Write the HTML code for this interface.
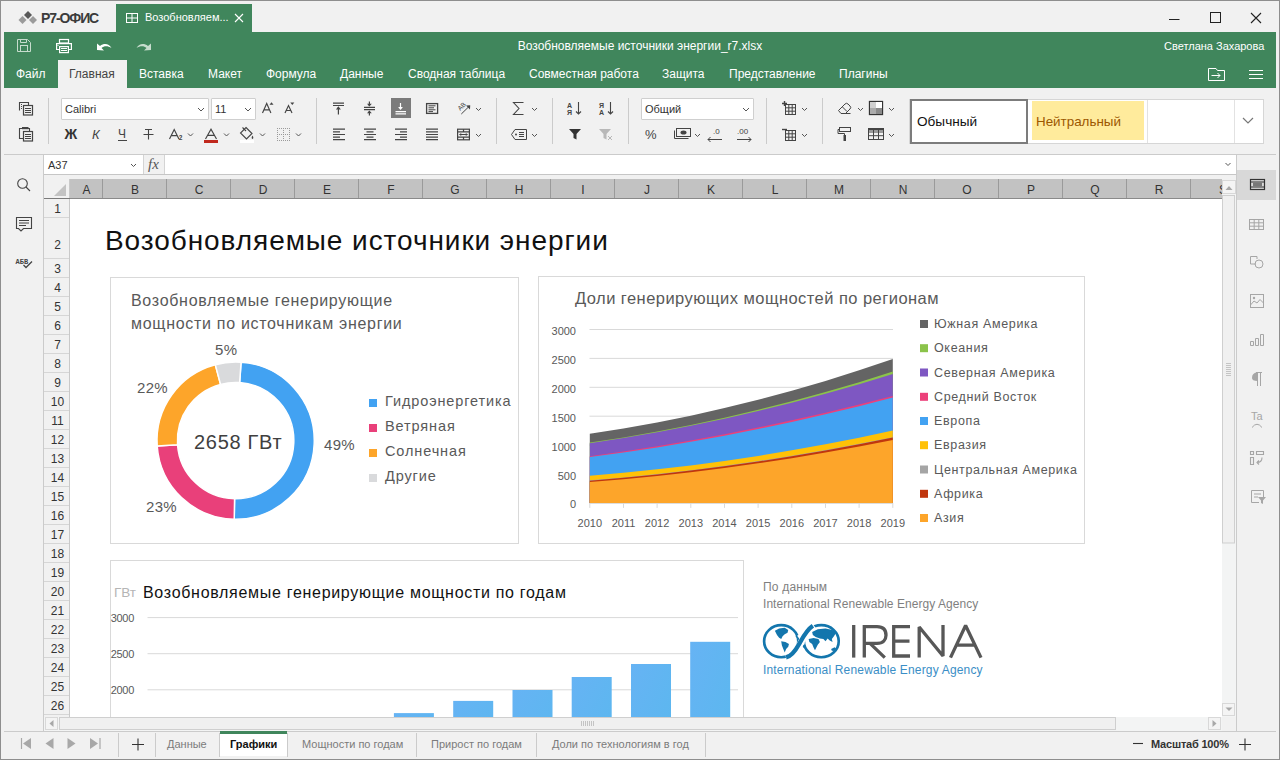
<!DOCTYPE html>
<html><head><meta charset="utf-8">
<style>
*{margin:0;padding:0;box-sizing:border-box}
html,body{width:1280px;height:760px;overflow:hidden;background:#f1f1f1;font-family:"Liberation Sans",sans-serif;}
.a{position:absolute;white-space:nowrap}
.menu span{position:absolute;top:67px;font-size:12px;color:#fff;white-space:nowrap}
.rh{position:absolute;left:44px;width:25px;text-align:center;font-size:12px;color:#333;background:#f1f1f1;border-right:1px solid #c9c9c9}
.rhl{position:absolute;left:44px;width:25px;height:1px;background:#d6d6d6}
.ch{position:absolute;top:181px;height:17px;text-align:center;font-size:12px;line-height:19px;color:#333}
.chl{position:absolute;top:179px;width:1px;height:19px;background:#9a9a9a}
.st{position:absolute;top:738px;font-size:11px;color:#7b7b7b;white-space:nowrap}
.sep{position:absolute;width:1px;background:#cbcbcb}
svg{position:absolute;left:0;top:0}
</style></head>
<body>
<!-- window border -->
<div class="a" style="left:0;top:0;width:1280px;height:760px;border:1px solid #8e8e8e"></div>

<!-- logo -->
<svg width="1280" height="34" viewBox="0 0 1280 34" style="top:0">
 <path d="M28 11 L32 15 L28 19 L24 15Z" fill="#595959"/>
 <path d="M22.5 16 L26.5 20 L22.5 24 L18.5 20Z" fill="#9b9b9b"/>
 <path d="M33 16 L37 20 L33 24 L29 20Z" fill="#9b9b9b"/>
 <!-- window controls -->
 <path d="M1169 19.5 H1179.5" stroke="#222" stroke-width="1"/>
 <rect x="1210.5" y="12.5" width="10" height="10" fill="none" stroke="#222" stroke-width="1"/>
 <path d="M1251 13 L1261 23 M1261 13 L1251 23" stroke="#222" stroke-width="1.1"/>
</svg>
<div class="a" style="left:41px;top:9.5px;font-size:14px;font-weight:bold;color:#3b3b3b;letter-spacing:-1.1px">Р7-ОФИС</div>

<!-- doc tab -->
<div class="a" style="left:116px;top:4px;width:136px;height:28px;background:#40865c"></div>
<div class="a" style="left:145px;top:11px;font-size:11px;color:#fff">Возобновляем...</div>

<!-- green header -->
<div class="a" style="left:4px;top:32px;width:1272px;height:56px;background:#40865c"></div>
<div class="a" style="left:58px;top:60px;width:69px;height:28px;background:#f1f1f1"></div>
<div class="a" style="left:0;top:39px;width:1280px;text-align:center;font-size:12px;color:#fff">Возобновляемые источники энергии_r7.xlsx</div>
<div class="a" style="left:1164px;top:40px;font-size:11px;color:#fff">Светлана Захарова</div>
<div class="menu">
<span style="left:16px">Файл</span>
<span style="left:69px;color:#444">Главная</span>
<span style="left:139px">Вставка</span>
<span style="left:208px">Макет</span>
<span style="left:266px">Формула</span>
<span style="left:340px">Данные</span>
<span style="left:408px">Сводная таблица</span>
<span style="left:529px">Совместная работа</span>
<span style="left:662px">Защита</span>
<span style="left:729px">Представление</span>
<span style="left:839px">Плагины</span>
</div>

<svg width="1280" height="90" viewBox="0 0 1280 90">
 <!-- tab icon -->
 <rect x="126.5" y="13.5" width="11" height="9" fill="none" stroke="#fff" stroke-width="1"/>
 <path d="M132 13.5 V22.5 M126.5 18 H137.5" stroke="#fff" stroke-width="1"/>
 <path d="M235 14 L243 22 M243 14 L235 22" stroke="#fff" stroke-width="1.1"/>
 <!-- save (disabled) -->
 <g stroke="#c6dccd" fill="none" stroke-width="1">
  <path d="M17.5 39.5 H27.5 L30.5 42.5 V51.5 H17.5 Z"/>
  <rect x="20.5" y="45.5" width="7" height="6"/>
  <path d="M20.5 39.5 V42.5 H26.5 V39.5"/>
 </g>
 <!-- print -->
 <g stroke="#fff" fill="none" stroke-width="1.2">
  <rect x="59.5" y="39.5" width="9" height="3.5"/>
  <path d="M59 49.5 H56.6 V43.6 H71.4 V49.5 H69"/>
  <rect x="59.6" y="46.6" width="8.8" height="6"/>
 </g>
 <path d="M61 48.5 H67 M61 50.5 H67" stroke="#fff" stroke-width="1"/>
 <rect x="57.5" y="45" width="1" height="1" fill="#fff"/>
 <!-- undo -->
 <path d="M97 50 L97 43.5 L100 46 C104 43 109 43.5 111.5 48 C108 45.5 104 45.5 101.5 48 L104 50.5 Z" fill="#fff"/>
 <!-- redo disabled -->
 <path d="M151 50 L151 43.5 L148 46 C144 43 139 43.5 136.5 48 C140 45.5 144 45.5 146.5 48 L144 50.5 Z" fill="#c6dccd"/>
 <!-- folder -->
 <g stroke="#fff" fill="none" stroke-width="1">
  <path d="M1208.5 80.5 V68.5 H1216 L1217.5 70.5 H1224.5 V80.5 Z"/>
  <path d="M1211.5 75.5 H1220 M1217.5 73 L1220 75.5 L1217.5 78"/>
 </g>
 <path d="M1249 70.5 H1263 M1249 74.5 H1263 M1249 78.5 H1263" stroke="#fff" stroke-width="1"/>
</svg>
<!-- TOOLBAR -->
<div class="a" style="left:4px;top:154px;width:1272px;height:1px;background:#cbcbcb"></div>
<div class="sep" style="left:48px;top:98px;height:46px"></div>
<div class="sep" style="left:316px;top:98px;height:46px"></div>
<div class="sep" style="left:496px;top:98px;height:46px"></div>
<div class="sep" style="left:552px;top:98px;height:46px"></div>
<div class="sep" style="left:628px;top:98px;height:46px"></div>
<div class="sep" style="left:766px;top:98px;height:46px"></div>
<div class="sep" style="left:822px;top:98px;height:46px"></div>
<!-- combos -->
<div class="a" style="left:61px;top:98px;width:148px;height:22px;background:#fff;border:1px solid #cfcfcf;border-radius:1px"></div>
<div class="a" style="left:65px;top:103px;font-size:11px;color:#333">Calibri</div>
<div class="a" style="left:211px;top:98px;width:45px;height:22px;background:#fff;border:1px solid #cfcfcf;border-radius:1px"></div>
<div class="a" style="left:215px;top:103px;font-size:11px;color:#333">11</div>
<div class="a" style="left:641px;top:98px;width:113px;height:22px;background:#fff;border:1px solid #cfcfcf;border-radius:1px"></div>
<div class="a" style="left:645px;top:103px;font-size:11px;color:#333">Общий</div>
<!-- style gallery -->
<div class="a" style="left:909px;top:99px;width:355px;height:45px;background:#fff;border:1px solid #d6d6d6"></div>
<div class="a" style="left:910px;top:99px;width:118px;height:45px;border:2px solid #7c7c7c;background:#fff"></div>
<div class="a" style="left:917px;top:114px;font-size:13.6px;color:#111">Обычный</div>
<div class="a" style="left:1032px;top:101px;width:112px;height:39px;background:#ffeb9c"></div>
<div class="a" style="left:1036px;top:114px;font-size:13.4px;color:#9c5700">Нейтральный</div>
<div class="sep" style="left:1147px;top:100px;height:43px;background:#e2e2e2"></div>
<div class="sep" style="left:1234px;top:100px;height:43px;background:#e2e2e2"></div>

<svg width="1280" height="160" viewBox="0 0 1280 160">
 <g fill="none" stroke="#444" stroke-width="1">
  <!-- copy -->
  <path d="M19.5 110.5 V102.5 H28.5 V105" stroke-width="1.1"/>
  <path d="M21 104.5 H22 M21 106.5 H22 M21 108.5 H22" />
  <rect x="23.5" y="105.5" width="9" height="9.5" stroke-width="1.2"/>
  <path d="M25 108.5 H31 M25 110.5 H31 M25 112.5 H31"/>
  <!-- paste -->
  <path d="M22 128.5 H19.5 V138.5 H23" stroke-width="1.1"/>
  <path d="M27 128.5 H29.5 V131" stroke-width="1.1"/>
  <rect x="22" y="127" width="6.5" height="2.2" fill="#444" stroke="none"/>
  <rect x="23.5" y="131.5" width="9" height="9.5" stroke-width="1.2"/>
  <path d="M25 134.5 H31 M25 136.5 H31 M25 138.5 H31"/>
 </g>
 <!-- chevrons in combos -->
 <g fill="none" stroke="#555" stroke-width="1">
  <path d="M198 108 L201 111 L204 108"/>
  <path d="M245 108 L248 111 L251 108"/>
  <path d="M743 108 L746 111 L749 108"/>
 </g>
 <!-- A+ A- -->
 <g fill="none" stroke="#444" stroke-width="1.15">
  <path d="M262.5 113 L266.7 103.5 L270.9 113 M264 109.8 H269.4"/>
  <path d="M285 113 L288.5 105.5 L292 113 M286.3 110.5 H290.7"/>
  <path d="M169.5 139 L174.2 129.5 L178.9 139 M171.2 135.6 H177.2"/>
  <path d="M205.5 139 L211 129.2 L216.5 139 M207.6 135.3 H214.4"/>
 </g>
 <path d="M271.5 102.3 L273.5 104.8 H269.5Z" fill="#444"/>
 <path d="M292.3 105 L294.3 102.6 H290.3Z" fill="#444"/>
 <text x="178.8" y="140" font-size="6.5" font-weight="bold" fill="#444" font-family="Liberation Sans">2</text>
 <!-- row 2 font -->
 <text x="64.5" y="139" font-size="14" font-weight="bold" fill="#333" font-family="Liberation Sans">Ж</text>
 <text x="92" y="138.7" font-size="13" font-style="italic" fill="#444" font-family="Liberation Sans">К</text>
 <text x="118" y="138" font-size="12" fill="#444" font-family="Liberation Sans">Ч</text>
 <path d="M118 140.5 H127" stroke="#444" stroke-width="1"/>
 <path d="M143.5 134.5 H153.5 M145 129.5 H152 M148.5 129.5 V139.5" stroke="#444" stroke-width="1.1" fill="none"/>
 <rect x="204" y="140" width="14" height="3" fill="#c0281d"/>
 <g fill="none" stroke="#444" stroke-width="1.1">
  <path d="M246 130 L252 136 L246.5 141.5 L240.5 135.5 Z" transform="translate(0,-2.5)"/>
  <path d="M242.5 127.5 L246 131"/>
 </g>
 <path d="M252.5 135.5 Q250.8 138 252.5 139 Q254.2 138 252.5 135.5Z" fill="#444"/>
 <rect x="240" y="140" width="14" height="3" fill="#fff"/>
 <g fill="#9a9a9a"><rect x="277" y="128" width="1" height="1"/><rect x="277" y="130" width="1" height="1"/><rect x="277" y="132" width="1" height="1"/><rect x="277" y="134" width="1" height="1"/><rect x="277" y="136" width="1" height="1"/><rect x="277" y="138" width="1" height="1"/><rect x="277" y="140" width="1" height="1"/><rect x="279" y="128" width="1" height="1"/><rect x="279" y="134" width="1" height="1"/><rect x="279" y="140" width="1" height="1"/><rect x="281" y="128" width="1" height="1"/><rect x="281" y="134" width="1" height="1"/><rect x="281" y="140" width="1" height="1"/><rect x="283" y="128" width="1" height="1"/><rect x="283" y="130" width="1" height="1"/><rect x="283" y="132" width="1" height="1"/><rect x="283" y="134" width="1" height="1"/><rect x="283" y="136" width="1" height="1"/><rect x="283" y="138" width="1" height="1"/><rect x="283" y="140" width="1" height="1"/><rect x="285" y="128" width="1" height="1"/><rect x="285" y="134" width="1" height="1"/><rect x="285" y="140" width="1" height="1"/><rect x="287" y="128" width="1" height="1"/><rect x="287" y="134" width="1" height="1"/><rect x="287" y="140" width="1" height="1"/><rect x="289" y="128" width="1" height="1"/><rect x="289" y="130" width="1" height="1"/><rect x="289" y="132" width="1" height="1"/><rect x="289" y="134" width="1" height="1"/><rect x="289" y="136" width="1" height="1"/><rect x="289" y="138" width="1" height="1"/><rect x="289" y="140" width="1" height="1"/></g>
 <g fill="none" stroke="#555" stroke-width="1">
  <path d="M188 133.5 L190.5 136 L193 133.5"/>
  <path d="M224 133.5 L226.5 136 L229 133.5"/>
  <path d="M260 133.5 L262.5 136 L265 133.5"/>
  <path d="M296 133.5 L298.5 136 L301 133.5"/>
 </g>
 <!-- alignment group -->
 <g fill="none" stroke="#444" stroke-width="1.2">
  <path d="M333 103.2 H344 M333 105.5 H344 M338.4 107 V114.5"/>
  <path d="M364 107.4 H375 M364 109.6 H375 M369.4 101.5 V106 M369.4 111 V115.5"/>
 </g>
 <path d="M335.9 109.5 L338.4 106.3 L340.9 109.5Z M367 103.8 L369.4 106.6 L371.8 103.8Z M367 113.2 L369.4 110.4 L371.8 113.2Z" fill="#444"/>
 <rect x="391" y="98" width="20" height="20" fill="#7b7b7b"/>
 <g fill="none" stroke="#fff" stroke-width="1.2">
  <path d="M395.5 111.6 H406 M395.5 113.8 H406 M400.5 103 V109"/>
 </g>
 <path d="M398.1 107 L400.5 110 L402.9 107Z" fill="#fff"/>
 <g fill="none" stroke="#444" stroke-width="1.3">
  <rect x="426.6" y="103.6" width="11" height="9.8"/>
 </g>
 <g fill="none" stroke="#444" stroke-width="1">
  <path d="M428.5 105.8 H435.5 M428.5 107.8 H434 M428.5 109.8 H435.5 M428.5 111.6 H433"/>
  <path d="M461.3 114 L469 106.5"/>
 </g>
 <path d="M466 105.5 L470.2 105.3 L470 109.5Z" fill="#444"/>
 <text x="457" y="109" font-size="6.5" fill="#444" font-family="Liberation Sans" transform="rotate(-45 461 106)">AB</text>
 <g fill="none" stroke="#444" stroke-width="1.2">
  <path d="M333 129.2 H345 M333 131.9 H340 M333 134.5 H345 M333 137.1 H340 M333 139.7 H345"/>
  <path d="M364 129.2 H376 M366.5 131.9 H373.5 M364 134.5 H376 M366.5 137.1 H373.5 M364 139.7 H376"/>
  <path d="M395 129.2 H407 M400 131.9 H407 M395 134.5 H407 M400 137.1 H407 M395 139.7 H407"/>
  <path d="M426 129.2 H438 M426 131.9 H438 M426 134.5 H438 M426 137.1 H438 M426 139.7 H438"/>
 </g>
 <g fill="none" stroke="#444" stroke-width="1.2">
  <rect x="457.6" y="129.2" width="11.8" height="10.6"/>
  <path d="M457.6 131.9 H469.4 M457.6 137.1 H469.4 M463.5 129.2 V131.9 M463.5 137.1 V139.8"/>
 </g>
 <path d="M459.5 134.5 H467.5" stroke="#444" stroke-width="1"/>
 <path d="M461.2 133 L459.3 134.5 L461.2 136Z M465.8 133 L467.7 134.5 L465.8 136Z" fill="#444"/>
 <g fill="none" stroke="#555" stroke-width="1">
  <path d="M476 108 L478.5 110.5 L481 108"/>
  <path d="M476 134 L478.5 136.5 L481 134"/>
  <path d="M532 108 L534.5 110.5 L537 108"/>
  <path d="M532 134 L534.5 136.5 L537 134"/>
 </g>
 <!-- sigma -->
 <path d="M523.5 102.5 H513.5 L519 108.5 L513.5 114.5 H523.5" fill="none" stroke="#444" stroke-width="1.1"/>
 <g fill="none" stroke="#444" stroke-width="1">
  <path d="M515 129.5 H526.5 V139.5 H515 L511.5 134.5 Z"/>
  <path d="M519 132.5 H524 M519 134.5 H524 M519 136.5 H524"/>
 </g>
 <circle cx="516" cy="134.5" r="1" fill="#444"/>
 <!-- sort -->
 <text x="567" y="108" font-size="7" font-weight="bold" fill="#444" font-family="Liberation Sans">A</text>
 <text x="567" y="115" font-size="7" font-weight="bold" fill="#444" font-family="Liberation Sans">Я</text>
 <path d="M578.5 102 V114 M576 111.5 L578.5 114 L581 111.5" fill="none" stroke="#444" stroke-width="1.1"/>
 <text x="599" y="108" font-size="7" font-weight="bold" fill="#444" font-family="Liberation Sans">Я</text>
 <text x="599" y="115" font-size="7" font-weight="bold" fill="#444" font-family="Liberation Sans">A</text>
 <path d="M610.5 102 V114 M608 111.5 L610.5 114 L613 111.5" fill="none" stroke="#444" stroke-width="1.1"/>
 <path d="M569 129 H581 L576.5 134 V139.5 L573.5 138 V134 Z" fill="#333"/>
 <path d="M599 129 H611 L606.5 134 V139.5 L603.5 138 V134 Z" fill="#b8b8b8"/>
 <path d="M608 136 L612 140 M612 136 L608 140" stroke="#b8b8b8" stroke-width="1"/>
 <!-- number -->
 <text x="645" y="139" font-size="13" fill="#444" font-family="Liberation Sans">%</text>
 <g fill="none" stroke="#444" stroke-width="1">
  <rect x="676.5" y="128.5" width="14" height="8"/>
  <path d="M674.5 130.5 V138.5 H688.5"/>
 </g>
 <ellipse cx="683.5" cy="132.5" rx="3" ry="2" fill="#444"/>
 <path d="M695 134 L697.5 136.5 L700 134" fill="none" stroke="#555"/>
 <text x="713" y="134" font-size="8" fill="#444" font-family="Liberation Sans">.0</text>
 <path d="M722 139.5 H708 M710.5 137 L708 139.5 L710.5 142" fill="none" stroke="#444"/>
 <text x="737" y="134" font-size="8" fill="#444" font-family="Liberation Sans">.00</text>
 <path d="M737 139.5 H751 M748.5 137 L751 139.5 L748.5 142" fill="none" stroke="#444"/>
 <!-- insert/delete cells -->
 <g fill="none" stroke="#444" stroke-width="1">
  <rect x="785.5" y="104.5" width="10" height="10"/>
  <path d="M785.5 107.8 H795.5 M785.5 111.2 H795.5 M788.8 104.5 V114.5 M792.2 104.5 V114.5"/>
  <path d="M784.5 101 V106 M782 103.5 H787" stroke-width="1.4"/>
  <rect x="785.5" y="130.5" width="10" height="10"/>
  <path d="M785.5 133.8 H795.5 M785.5 137.2 H795.5 M788.8 130.5 V140.5 M792.2 130.5 V140.5"/>
  <path d="M782 129.5 H787" stroke-width="1.4"/>
 </g>
 <g fill="none" stroke="#555" stroke-width="1">
  <path d="M802 108 L804.5 110.5 L807 108"/>
  <path d="M802 134 L804.5 136.5 L807 134"/>
  <path d="M858 108 L860.5 110.5 L863 108"/>
  <path d="M889 108 L891.5 110.5 L894 108"/>
  <path d="M889 134 L891.5 136.5 L894 134"/>
 </g>
 <!-- eraser -->
 <g fill="none" stroke="#444" stroke-width="1">
  <path d="M838.5 110.5 L845 104 Q846.5 102.5 848 104 L850 106 Q851.5 107.5 850 109 L845.5 113.5 H841 Z"/>
  <path d="M842.5 107 L847 111.5 M843 113.5 H850.5"/>
 </g>
 <!-- fill -->
 <rect x="869.5" y="101.5" width="13" height="13" fill="none" stroke="#333" stroke-width="1.3"/>
 <rect x="870" y="102" width="6" height="6" fill="#d0d0d0"/>
 <rect x="876" y="102" width="6" height="6" fill="#fff"/>
 <rect x="870" y="108" width="6" height="6" fill="#ababab"/>
 <rect x="876" y="108" width="6" height="6" fill="#8a8a8a"/>
 <!-- format painter -->
 <g fill="none" stroke="#444" stroke-width="1">
  <rect x="839.5" y="127.5" width="11" height="4"/>
  <path d="M839.5 129.5 H838 V133.5 H844.5 V135"/>
 </g>
 <rect x="843.5" y="135" width="2.5" height="6" fill="#444"/>
 <!-- table -->
 <g fill="none" stroke="#444" stroke-width="1">
  <rect x="868.5" y="128.5" width="15" height="11"/>
  <path d="M868.5 132 H883.5 M868.5 135.7 H883.5 M873.5 128.5 V139.5 M878.5 128.5 V139.5"/>
 </g>
 <rect x="869" y="129" width="14" height="1.5" fill="#444"/>
 <!-- gallery chevron -->
 <path d="M1243 118 L1248 123 L1253 118" fill="none" stroke="#777" stroke-width="1.2"/>
</svg>
<!-- FORMULA BAR & GRID FRAME -->
<div class="sep" style="left:43px;top:155px;height:576px"></div>
<div class="sep" style="left:1236px;top:155px;height:576px"></div>
<div class="a" style="left:44px;top:155px;width:1192px;height:20px;background:#fff;border-bottom:1px solid #c6c6c6"></div>
<div class="a" style="left:143px;top:155px;width:22px;height:19px;background:#f1f1f1;border-left:1px solid #d4d4d4;border-right:1px solid #d4d4d4"></div>
<div class="a" style="left:48px;top:159px;font-size:11px;color:#333">A37</div>
<div class="a" style="left:148px;top:156px;font-size:15px;font-style:italic;font-family:'Liberation Serif',serif;color:#555">fx</div>
<div class="a" style="left:44px;top:175px;width:1192px;height:4px;background:#f1f1f1"></div>
<div class="a" style="left:69px;top:198px;width:1153px;height:519px;background:#fff"></div>
<div class="a" style="left:44px;top:179px;width:26px;height:19px;background:#f1f1f1;border-right:1px solid #c9c9c9"></div>
<div class="a" style="left:44px;top:198px;width:26px;height:1px;background:#7a7a7a"></div>
<div class="a" style="left:70px;top:179px;width:1152px;height:19px;background:#c2c2c2"></div>
<div class="a" style="left:70px;top:198px;width:1152px;height:1px;background:#8a8a8a"></div>

<div class="ch" style="left:70px;width:33px">A</div>
<div class="chl" style="left:102px"></div>
<div class="ch" style="left:103px;width:64px">B</div>
<div class="chl" style="left:166px"></div>
<div class="ch" style="left:167px;width:64px">C</div>
<div class="chl" style="left:230px"></div>
<div class="ch" style="left:231px;width:64px">D</div>
<div class="chl" style="left:294px"></div>
<div class="ch" style="left:295px;width:64px">E</div>
<div class="chl" style="left:358px"></div>
<div class="ch" style="left:359px;width:64px">F</div>
<div class="chl" style="left:422px"></div>
<div class="ch" style="left:423px;width:64px">G</div>
<div class="chl" style="left:486px"></div>
<div class="ch" style="left:487px;width:64px">H</div>
<div class="chl" style="left:550px"></div>
<div class="ch" style="left:551px;width:64px">I</div>
<div class="chl" style="left:614px"></div>
<div class="ch" style="left:615px;width:64px">J</div>
<div class="chl" style="left:678px"></div>
<div class="ch" style="left:679px;width:64px">K</div>
<div class="chl" style="left:742px"></div>
<div class="ch" style="left:743px;width:64px">L</div>
<div class="chl" style="left:806px"></div>
<div class="ch" style="left:807px;width:64px">M</div>
<div class="chl" style="left:870px"></div>
<div class="ch" style="left:871px;width:64px">N</div>
<div class="chl" style="left:934px"></div>
<div class="ch" style="left:935px;width:64px">O</div>
<div class="chl" style="left:998px"></div>
<div class="ch" style="left:999px;width:64px">P</div>
<div class="chl" style="left:1062px"></div>
<div class="ch" style="left:1063px;width:64px">Q</div>
<div class="chl" style="left:1126px"></div>
<div class="ch" style="left:1127px;width:64px">R</div>
<div class="chl" style="left:1190px"></div>
<div class="ch" style="left:1191px;width:64px;clip-path:inset(0 32px 0 0)">S</div>
<div class="a" style="left:44px;top:199px;width:26px;height:518px;background:#f1f1f1;border-right:1px solid #c9c9c9"></div>
<div class="a" style="left:45px;top:202px;width:25px;text-align:center;font-size:12px;color:#333">1</div>
<div class="rhl" style="top:217px"></div>
<div class="a" style="left:45px;top:238px;width:25px;text-align:center;font-size:12px;color:#333">2</div>
<div class="rhl" style="top:258px"></div>
<div class="a" style="left:45px;top:262px;width:25px;text-align:center;font-size:12px;color:#333">3</div>
<div class="rhl" style="top:277px"></div>
<div class="a" style="left:45px;top:281px;width:25px;text-align:center;font-size:12px;color:#333">4</div>
<div class="rhl" style="top:296px"></div>
<div class="a" style="left:45px;top:300px;width:25px;text-align:center;font-size:12px;color:#333">5</div>
<div class="rhl" style="top:315px"></div>
<div class="a" style="left:45px;top:319px;width:25px;text-align:center;font-size:12px;color:#333">6</div>
<div class="rhl" style="top:334px"></div>
<div class="a" style="left:45px;top:338px;width:25px;text-align:center;font-size:12px;color:#333">7</div>
<div class="rhl" style="top:353px"></div>
<div class="a" style="left:45px;top:357px;width:25px;text-align:center;font-size:12px;color:#333">8</div>
<div class="rhl" style="top:372px"></div>
<div class="a" style="left:45px;top:376px;width:25px;text-align:center;font-size:12px;color:#333">9</div>
<div class="rhl" style="top:391px"></div>
<div class="a" style="left:45px;top:395px;width:25px;text-align:center;font-size:12px;color:#333">10</div>
<div class="rhl" style="top:410px"></div>
<div class="a" style="left:45px;top:414px;width:25px;text-align:center;font-size:12px;color:#333">11</div>
<div class="rhl" style="top:429px"></div>
<div class="a" style="left:45px;top:433px;width:25px;text-align:center;font-size:12px;color:#333">12</div>
<div class="rhl" style="top:448px"></div>
<div class="a" style="left:45px;top:452px;width:25px;text-align:center;font-size:12px;color:#333">13</div>
<div class="rhl" style="top:467px"></div>
<div class="a" style="left:45px;top:471px;width:25px;text-align:center;font-size:12px;color:#333">14</div>
<div class="rhl" style="top:486px"></div>
<div class="a" style="left:45px;top:490px;width:25px;text-align:center;font-size:12px;color:#333">15</div>
<div class="rhl" style="top:505px"></div>
<div class="a" style="left:45px;top:509px;width:25px;text-align:center;font-size:12px;color:#333">16</div>
<div class="rhl" style="top:524px"></div>
<div class="a" style="left:45px;top:528px;width:25px;text-align:center;font-size:12px;color:#333">17</div>
<div class="rhl" style="top:543px"></div>
<div class="a" style="left:45px;top:547px;width:25px;text-align:center;font-size:12px;color:#333">18</div>
<div class="rhl" style="top:562px"></div>
<div class="a" style="left:45px;top:566px;width:25px;text-align:center;font-size:12px;color:#333">19</div>
<div class="rhl" style="top:581px"></div>
<div class="a" style="left:45px;top:585px;width:25px;text-align:center;font-size:12px;color:#333">20</div>
<div class="rhl" style="top:600px"></div>
<div class="a" style="left:45px;top:604px;width:25px;text-align:center;font-size:12px;color:#333">21</div>
<div class="rhl" style="top:619px"></div>
<div class="a" style="left:45px;top:623px;width:25px;text-align:center;font-size:12px;color:#333">22</div>
<div class="rhl" style="top:638px"></div>
<div class="a" style="left:45px;top:642px;width:25px;text-align:center;font-size:12px;color:#333">23</div>
<div class="rhl" style="top:657px"></div>
<div class="a" style="left:45px;top:661px;width:25px;text-align:center;font-size:12px;color:#333">24</div>
<div class="rhl" style="top:676px"></div>
<div class="a" style="left:45px;top:680px;width:25px;text-align:center;font-size:12px;color:#333">25</div>
<div class="rhl" style="top:695px"></div>
<div class="a" style="left:45px;top:699px;width:25px;text-align:center;font-size:12px;color:#333">26</div>
<div class="rhl" style="top:714px"></div><!-- SHEET CONTENT -->
<div class="a" style="left:0;top:0;width:1222px;height:717px;overflow:hidden">
<div class="a" style="left:105px;top:225px;font-size:28px;color:#111;letter-spacing:0.93px">Возобновляемые источники энергии</div>
<div class="a" style="left:110px;top:277px;width:409px;height:267px;border:1px solid #d9d9d9;background:#fff"></div>
<div class="a" style="left:131px;top:289px;font-size:16px;line-height:23.4px;color:#595959;letter-spacing:0.7px">Возобновляемые генерирующие<br>мощности по источникам энергии</div>
<svg width="1280" height="760" viewBox="0 0 1280 760">
<path d="M241.08 362.19 A78.6 78.6 0 0 1 234.23 519.19 L234.58 498.79 A58.2 58.2 0 0 0 239.66 382.54Z" fill="#42a2f2" stroke="#fff" stroke-width="1.5" stroke-linejoin="bevel"/>
<path d="M234.23 519.19 A78.6 78.6 0 0 1 157.19 446.08 L177.54 444.66 A58.2 58.2 0 0 0 234.58 498.79Z" fill="#e9407a" stroke="#fff" stroke-width="1.5" stroke-linejoin="bevel"/>
<path d="M157.19 446.08 A78.6 78.6 0 0 1 215.26 364.68 L220.54 384.38 A58.2 58.2 0 0 0 177.54 444.66Z" fill="#fda52a" stroke="#fff" stroke-width="1.5" stroke-linejoin="bevel"/>
<path d="M215.26 364.68 A78.6 78.6 0 0 1 241.08 362.19 L239.66 382.54 A58.2 58.2 0 0 0 220.54 384.38Z" fill="#d9dadc" stroke="#fff" stroke-width="1.5" stroke-linejoin="bevel"/>
<rect x="369" y="399" width="8" height="8" fill="#42a2f2"/>
<rect x="369" y="424" width="8" height="8" fill="#e9407a"/>
<rect x="369" y="449" width="8" height="8" fill="#fda52a"/>
<rect x="369" y="474" width="8" height="8" fill="#d9dadc"/>
</svg>
<div class="a" style="left:194px;top:430.5px;font-size:20px;color:#404040;letter-spacing:0.7px">2658 ГВт</div>
<div class="a" style="left:215px;top:341px;font-size:15px;color:#595959;letter-spacing:0.3px">5%</div>
<div class="a" style="left:137px;top:379px;font-size:15px;color:#595959;letter-spacing:0.3px">22%</div>
<div class="a" style="left:324px;top:436px;font-size:15px;color:#595959;letter-spacing:0.3px">49%</div>
<div class="a" style="left:146px;top:498px;font-size:15px;color:#595959;letter-spacing:0.3px">23%</div>
<div class="a" style="left:385px;top:393px;font-size:14.5px;color:#595959;letter-spacing:0.88px">Гидроэнергетика</div>
<div class="a" style="left:385px;top:418px;font-size:14.5px;color:#595959;letter-spacing:0.88px">Ветряная</div>
<div class="a" style="left:385px;top:443px;font-size:14.5px;color:#595959;letter-spacing:0.88px">Солнечная</div>
<div class="a" style="left:385px;top:468px;font-size:14.5px;color:#595959;letter-spacing:0.88px">Другие</div>
<div class="a" style="left:538px;top:276px;width:547px;height:268px;border:1px solid #d9d9d9;background:#fff"></div>
<div class="a" style="left:575px;top:289px;font-size:16.5px;color:#595959;letter-spacing:0.45px">Доли генерирующих мощностей по регионам</div>
<svg width="1280" height="760" viewBox="0 0 1280 760">
<path d="M589.5 474.0 H893" stroke="#d9d9d9" stroke-width="1"/>
<path d="M589.5 445.1 H893" stroke="#d9d9d9" stroke-width="1"/>
<path d="M589.5 416.2 H893" stroke="#d9d9d9" stroke-width="1"/>
<path d="M589.5 387.3 H893" stroke="#d9d9d9" stroke-width="1"/>
<path d="M589.5 358.4 H893" stroke="#d9d9d9" stroke-width="1"/>
<path d="M589.5 329.5 H893" stroke="#d9d9d9" stroke-width="1"/>
<path d="M589.5 503.4 H893" stroke="#d9d9d9" stroke-width="1"/>
<path d="M589.8 502.9 V507.9" stroke="#d9d9d9" stroke-width="1"/>
<path d="M623.5 502.9 V507.9" stroke="#d9d9d9" stroke-width="1"/>
<path d="M657.1 502.9 V507.9" stroke="#d9d9d9" stroke-width="1"/>
<path d="M690.8 502.9 V507.9" stroke="#d9d9d9" stroke-width="1"/>
<path d="M724.5 502.9 V507.9" stroke="#d9d9d9" stroke-width="1"/>
<path d="M758.1 502.9 V507.9" stroke="#d9d9d9" stroke-width="1"/>
<path d="M791.8 502.9 V507.9" stroke="#d9d9d9" stroke-width="1"/>
<path d="M825.5 502.9 V507.9" stroke="#d9d9d9" stroke-width="1"/>
<path d="M859.1 502.9 V507.9" stroke="#d9d9d9" stroke-width="1"/>
<path d="M892.8 502.9 V507.9" stroke="#d9d9d9" stroke-width="1"/>
<polygon points="589.80,502.9 589.80,433.83 623.47,428.53 657.13,422.48 690.80,415.68 724.47,408.12 758.13,399.81 791.80,390.75 825.47,380.93 859.13,370.36 892.80,359.04 892.80,502.9" fill="#646464"/>
<polygon points="589.80,502.9 589.80,442.61 623.47,437.40 657.13,431.52 690.80,424.97 724.47,417.75 758.13,409.86 791.80,401.29 825.47,392.06 859.13,382.15 892.80,371.58 892.80,502.9" fill="#8bc34a"/>
<polygon points="589.80,502.9 589.80,443.31 623.47,438.11 657.13,432.28 690.80,425.83 724.47,418.76 758.13,411.06 791.80,402.73 825.47,393.78 859.13,384.21 892.80,374.01 892.80,502.9" fill="#7e57c2"/>
<polygon points="589.80,502.9 589.80,456.37 623.47,451.56 657.13,446.27 690.80,440.50 724.47,434.26 758.13,427.55 791.80,420.37 825.47,412.71 859.13,404.58 892.80,395.97 892.80,502.9" fill="#ec407a"/>
<polygon points="589.80,502.9 589.80,457.06 623.47,452.48 657.13,447.38 690.80,441.77 724.47,435.66 758.13,429.04 791.80,421.91 825.47,414.27 859.13,406.13 892.80,397.47 892.80,502.9" fill="#42a2f2"/>
<polygon points="589.80,502.9 589.80,475.68 623.47,472.79 657.13,469.37 690.80,465.41 724.47,460.93 758.13,455.90 791.80,450.35 825.47,444.26 859.13,437.63 892.80,430.48 892.80,502.9" fill="#ffc107"/>
<polygon points="589.80,502.9 589.80,480.30 623.47,477.39 657.13,474.00 690.80,470.15 724.47,465.83 758.13,461.03 791.80,455.76 825.47,450.02 859.13,443.82 892.80,437.14 892.80,502.9" fill="#a5a5a5"/>
<polygon points="589.80,502.9 589.80,480.76 623.47,477.85 657.13,474.47 690.80,470.61 724.47,466.29 758.13,461.49 791.80,456.22 825.47,450.49 859.13,444.28 892.80,437.60 892.80,502.9" fill="#c0360e"/>
<polygon points="589.80,502.9 589.80,481.92 623.47,479.13 657.13,475.88 690.80,472.15 724.47,467.95 758.13,463.28 791.80,458.14 825.47,452.53 859.13,446.45 892.80,439.90 892.80,502.9" fill="#fda52a"/>
<rect x="920" y="320.0" width="8" height="8" fill="#646464"/>
<rect x="920" y="344.2" width="8" height="8" fill="#8bc34a"/>
<rect x="920" y="368.5" width="8" height="8" fill="#7e57c2"/>
<rect x="920" y="392.8" width="8" height="8" fill="#ec407a"/>
<rect x="920" y="417.0" width="8" height="8" fill="#42a2f2"/>
<rect x="920" y="441.2" width="8" height="8" fill="#ffc107"/>
<rect x="920" y="465.5" width="8" height="8" fill="#a5a5a5"/>
<rect x="920" y="489.8" width="8" height="8" fill="#c0360e"/>
<rect x="920" y="514.0" width="8" height="8" fill="#fda52a"/>
</svg>
<div class="a" style="left:934px;top:317.0px;font-size:12.5px;color:#595959;letter-spacing:0.65px">Южная Америка</div>
<div class="a" style="left:934px;top:341.2px;font-size:12.5px;color:#595959;letter-spacing:0.65px">Океания</div>
<div class="a" style="left:934px;top:365.5px;font-size:12.5px;color:#595959;letter-spacing:0.65px">Северная Америка</div>
<div class="a" style="left:934px;top:389.8px;font-size:12.5px;color:#595959;letter-spacing:0.65px">Средний Восток</div>
<div class="a" style="left:934px;top:414.0px;font-size:12.5px;color:#595959;letter-spacing:0.65px">Европа</div>
<div class="a" style="left:934px;top:438.2px;font-size:12.5px;color:#595959;letter-spacing:0.65px">Евразия</div>
<div class="a" style="left:934px;top:462.5px;font-size:12.5px;color:#595959;letter-spacing:0.65px">Центральная Америка</div>
<div class="a" style="left:934px;top:486.8px;font-size:12.5px;color:#595959;letter-spacing:0.65px">Африка</div>
<div class="a" style="left:934px;top:511.0px;font-size:12.5px;color:#595959;letter-spacing:0.65px">Азия</div>
<div class="a" style="left:536px;width:40px;text-align:right;top:498.4px;font-size:11px;color:#595959">0</div>
<div class="a" style="left:536px;width:40px;text-align:right;top:469.5px;font-size:11px;color:#595959">500</div>
<div class="a" style="left:536px;width:40px;text-align:right;top:440.6px;font-size:11px;color:#595959">1000</div>
<div class="a" style="left:536px;width:40px;text-align:right;top:411.7px;font-size:11px;color:#595959">1500</div>
<div class="a" style="left:536px;width:40px;text-align:right;top:382.8px;font-size:11px;color:#595959">2000</div>
<div class="a" style="left:536px;width:40px;text-align:right;top:353.9px;font-size:11px;color:#595959">2500</div>
<div class="a" style="left:536px;width:40px;text-align:right;top:325.0px;font-size:11px;color:#595959">3000</div>
<div class="a" style="left:569.8px;width:40px;text-align:center;top:517px;font-size:11px;color:#595959">2010</div>
<div class="a" style="left:603.5px;width:40px;text-align:center;top:517px;font-size:11px;color:#595959">2011</div>
<div class="a" style="left:637.1px;width:40px;text-align:center;top:517px;font-size:11px;color:#595959">2012</div>
<div class="a" style="left:670.8px;width:40px;text-align:center;top:517px;font-size:11px;color:#595959">2013</div>
<div class="a" style="left:704.5px;width:40px;text-align:center;top:517px;font-size:11px;color:#595959">2014</div>
<div class="a" style="left:738.1px;width:40px;text-align:center;top:517px;font-size:11px;color:#595959">2015</div>
<div class="a" style="left:771.8px;width:40px;text-align:center;top:517px;font-size:11px;color:#595959">2016</div>
<div class="a" style="left:805.5px;width:40px;text-align:center;top:517px;font-size:11px;color:#595959">2017</div>
<div class="a" style="left:839.1px;width:40px;text-align:center;top:517px;font-size:11px;color:#595959">2018</div>
<div class="a" style="left:872.8px;width:40px;text-align:center;top:517px;font-size:11px;color:#595959">2019</div>
<div class="a" style="left:110px;top:560px;width:634px;height:200px;border:1px solid #d9d9d9;background:#fff"></div>
<div class="a" style="left:114px;top:585px;font-size:13.5px;color:#b5b5b5">ГВт</div>
<div class="a" style="left:143px;top:584px;font-size:16px;color:#111;letter-spacing:0.7px">Возобновляемые генерирующие мощности по годам</div>
<svg width="1280" height="760" viewBox="0 0 1280 760">
<path d="M147.5 725.9 H738" stroke="#d9d9d9" stroke-width="1"/>
<path d="M147.5 689.8 H738" stroke="#d9d9d9" stroke-width="1"/>
<path d="M147.5 653.7 H738" stroke="#d9d9d9" stroke-width="1"/>
<path d="M147.5 617.6 H738" stroke="#d9d9d9" stroke-width="1"/>
<defs><linearGradient id="bg" x1="0" y1="0" x2="1" y2="1"><stop offset="0" stop-color="#66b3f4"/><stop offset="1" stop-color="#5ab8ee"/></linearGradient></defs>
<rect x="156.9" y="745.3" width="40" height="14.7" fill="url(#bg)"/>
<rect x="216.2" y="737.7" width="40" height="22.3" fill="url(#bg)"/>
<rect x="275.4" y="729.5" width="40" height="30.5" fill="url(#bg)"/>
<rect x="334.7" y="720.9" width="40" height="39.1" fill="url(#bg)"/>
<rect x="393.9" y="713.1" width="40" height="46.9" fill="url(#bg)"/>
<rect x="453.2" y="700.9" width="40" height="59.1" fill="url(#bg)"/>
<rect x="512.5" y="690.0" width="40" height="70.0" fill="url(#bg)"/>
<rect x="571.7" y="677.0" width="40" height="83.0" fill="url(#bg)"/>
<rect x="631.0" y="664.0" width="40" height="96.0" fill="url(#bg)"/>
<rect x="690.2" y="641.8" width="40" height="118.2" fill="url(#bg)"/>
</svg>
<div class="a" style="left:94px;width:40px;text-align:right;top:683.8px;font-size:11px;color:#595959;letter-spacing:-0.3px">2000</div>
<div class="a" style="left:94px;width:40px;text-align:right;top:647.7px;font-size:11px;color:#595959;letter-spacing:-0.3px">2500</div>
<div class="a" style="left:94px;width:40px;text-align:right;top:611.6px;font-size:11px;color:#595959;letter-spacing:-0.3px">3000</div>
<div class="a" style="left:763px;top:580px;font-size:12px;color:#7f7f7f;letter-spacing:0.2px">По данным</div>
<div class="a" style="left:763px;top:597px;font-size:12px;color:#7f7f7f;letter-spacing:0.05px">International Renewable Energy Agency</div>
<svg width="1280" height="760" viewBox="0 0 1280 760">
 <g transform="translate(758 618) scale(0.07032)" fill="#1376ad">
  <ellipse cx="330" cy="330" rx="243" ry="228" fill="none" stroke="#1376ad" stroke-width="38"/>
  <ellipse cx="900" cy="330" rx="248" ry="228" fill="none" stroke="#1376ad" stroke-width="38"/>
  <path d="M560 250 C600 300 620 340 650 380" stroke="#fff" stroke-width="40" fill="none"/>
  <path d="M540 250 C580 300 610 350 660 420" stroke="#1376ad" stroke-width="22" fill="none"/>
  <path d="M400 575 C470 560 540 480 600 370 C650 270 700 170 790 100" stroke="#fff" stroke-width="95" fill="none"/>
  <path d="M400 560 C470 545 530 470 585 370 C640 270 690 170 780 110" stroke="#1376ad" stroke-width="62" fill="none"/>
  <path d="M240 180 L300 150 L380 140 L430 170 L420 210 L380 230 L350 260 L330 300 L300 280 L270 240 Z"/>
  <path d="M330 330 L390 340 L440 370 L430 410 L400 440 L380 490 L360 440 L340 390 Z"/>
  <path d="M770 200 L850 160 L960 150 L1060 170 L1110 210 L1080 260 L1050 300 L1060 340 L1020 320 L990 290 L960 330 L930 300 L880 290 L820 270 L780 240 Z"/>
  <path d="M720 300 L790 285 L860 300 L880 340 L850 380 L830 420 L810 460 L790 420 L770 370 L730 340 Z"/>
  <path d="M1040 440 L1090 415 L1115 440 L1090 470 L1050 465 Z"/>
 </g>
 <g fill="none" stroke="#575757" stroke-width="3.3" stroke-linejoin="miter" stroke-miterlimit="1.5">
  <path d="M853.7 625 V657.6"/>
  <path d="M864.3 657.6 V626.6 H877 C884 626.6 886 630.5 886 635.2 C886 640 883 643.4 877 643.4 H865.5 M870 643.4 L884.8 657.6"/>
  <path d="M910 626.6 H893.7 V656 H910 M893.7 641.2 H909.5"/>
  <path d="M919.2 657.6 V627 L943 656 V625"/>
  <path d="M950.5 657.6 L965.6 625.5 L981 657.6 M956 645.2 H975.5"/>
 </g>
</svg>
<div class="a" style="left:763px;top:663px;font-size:12px;color:#3a8ec6;letter-spacing:0.17px">International Renewable Energy Agency</div>

</div><!-- select all triangle -->
<svg width="1280" height="760" viewBox="0 0 1280 760">
 <path d="M66 184 V196 H54 Z" fill="#c3c3c3"/>
 <path d="M131 164 L133.5 166.5 L136 164" fill="none" stroke="#555"/>
 <path d="M1225.5 163 L1228 165.5 L1230.5 163" fill="none" stroke="#555"/>
 <!-- left sidebar icons -->
 <g fill="none" stroke="#444" stroke-width="1.1">
  <circle cx="22.5" cy="183.5" r="4.8"/>
  <path d="M26 187 L30 191"/>
  <path d="M16.5 217.5 H31.5 V228.5 H23.5 L21 231 L18.5 228.5 H16.5 Z" stroke-width="1.1"/>
  <path d="M19 220.5 H29 M19 223 H29 M19 225.5 H26" stroke-width="1"/>
 </g>
 <text x="15.5" y="264" font-size="7" font-weight="bold" fill="#444" font-family="Liberation Mono">АБВ</text>
 <path d="M23.5 265 L26 267.5 L32 261.5" fill="none" stroke="#444" stroke-width="1.3"/>
 <!-- right sidebar -->
 <rect x="1237" y="170" width="39" height="30" fill="#d8d8d8"/>
 <g fill="none" stroke="#333" stroke-width="1.2">
  <rect x="1250.5" y="179.5" width="14" height="10"/>
  <path d="M1250.5 182 H1264.5 M1250.5 187 H1264.5"/>
 </g>
 <rect x="1253" y="182.5" width="9" height="4" fill="#777"/>
 <g fill="none" stroke="#a6a6a6" stroke-width="1">
  <rect x="1249.5" y="219.5" width="14" height="10"/>
  <path d="M1249.5 222.8 H1263.5 M1249.5 226.2 H1263.5 M1254.2 219.5 V229.5 M1258.8 219.5 V229.5"/>
  <path d="M1256 264 H1250.5 V256.5 H1257 V259"/>
  <circle cx="1259" cy="264" r="4"/>
  <rect x="1250.5" y="294.5" width="13" height="13"/>
  <path d="M1250.5 305 L1254 301 L1257 303 L1260 299.5 L1263.5 303"/>
  <path d="M1250.5 345.5 V341.5 H1253.5 V345.5 Z M1255.5 345.5 V338.5 H1258.5 V345.5 Z M1260.5 345.5 V334.5 H1263.5 V345.5 Z"/>
  <path d="M1257.5 373 V386 M1260.5 373 V386 M1262 372.5 H1256"/>
  <path d="M1252 427.5 Q1257 421 1262 427.5"/>
  <path d="M1250.5 451.5 H1253.5 V454.5 H1250.5 Z M1250.5 457.5 H1253.5 V464.5 H1250.5 Z M1256.5 451.5 H1263.5 V454.5 H1256.5 Z M1257 462.5 Q1262 462.5 1262 457.5 M1259 460.5 L1257 462.5 L1259 464.5" stroke-width="1.1"/>
  <path d="M1251.5 490.5 V502.5 H1259 M1251.5 490.5 H1263.5 V497 M1254 494 H1261 M1254 497 H1258"/>
 </g>
 <path d="M1252 378 Q1252 372.5 1257.5 372.5 V381 Q1252 381 1252 378Z" fill="#a6a6a6"/>
 <text x="1251" y="420" font-size="11" fill="#a6a6a6" font-family="Liberation Sans">Ta</text>
 <path d="M1258 497 H1266 L1263 500.5 V504 L1261 503 V500.5 Z" fill="#a6a6a6"/>
 <circle cx="1254" cy="298" r="1.2" fill="#a6a6a6"/>
 <!-- vertical scrollbar -->
 <rect x="1222" y="180" width="14" height="537" fill="#f3f4f4"/>
 <rect x="1222.5" y="180.5" width="13" height="13" fill="#f4f4f4" stroke="#d8d8d8"/>
 <path d="M1225.5 190 L1229 186 L1232.5 190 Z" fill="#a8a8a8"/>
 <rect x="1222.5" y="195.5" width="12" height="347.5" fill="#f0f0f0" stroke="#cfcfcf"/>
 <path d="M1226 363.5 H1231 M1226 365.5 H1231 M1226 367.5 H1231 M1226 369.5 H1231 M1226 371.5 H1231 M1226 373.5 H1231 M1226 375.5 H1231" stroke="#c4c4c4" stroke-width="1"/>
 <rect x="1222.5" y="703.5" width="12" height="12" fill="#f4f4f4" stroke="#d8d8d8"/>
 <path d="M1225.5 707.5 L1229 711 L1232.5 707.5 Z" fill="#a8a8a8"/>
 <!-- horizontal scrollbar -->
 <rect x="44" y="717" width="1178" height="14" fill="#f3f4f4"/>
 <rect x="45.5" y="717.5" width="12" height="12" fill="#f4f4f4" stroke="#d8d8d8"/>
 <path d="M53.5 720 L49.5 723.5 L53.5 727 Z" fill="#a8a8a8"/>
 <rect x="59.5" y="717.5" width="1056" height="12" fill="#f0f0f0" stroke="#cfcfcf"/>
 <path d="M581.5 721 V726 M583.5 721 V726 M585.5 721 V726 M587.5 721 V726 M589.5 721 V726 M591.5 721 V726 M593.5 721 V726" stroke="#c4c4c4" stroke-width="1"/>
 <rect x="1208.5" y="717.5" width="12" height="12" fill="#f4f4f4" stroke="#d8d8d8"/>
 <path d="M1212.5 720 L1216.5 723.5 L1212.5 727 Z" fill="#a8a8a8"/>
 <!-- status bar -->
 <path d="M4 731.5 H1276" stroke="#cbcbcb"/>
 <path d="M21.5 738 V749" stroke="#a8a8a8" stroke-width="1.2"/>
 <path d="M31 738 L23 743.5 L31 749 Z" fill="#a8a8a8"/>
 <path d="M53.5 738 L45.5 743.5 L53.5 749 Z" fill="#a8a8a8"/>
 <path d="M67.5 738 L75.5 743.5 L67.5 749 Z" fill="#a8a8a8"/>
 <path d="M90 738 L98 743.5 L90 749 Z" fill="#a8a8a8"/>
 <path d="M100 738 V749" stroke="#a8a8a8" stroke-width="1.2"/>
 <path d="M118.5 733 V757 M155.5 733 V757 M219.5 733 V757 M287.5 733 V757 M416.5 733 V757 M536.5 733 V757 M705.5 733 V757" stroke="#cbcbcb"/>
 <path d="M132 744.5 H144 M138 738.5 V750.5" stroke="#333" stroke-width="1.1"/>
 <rect x="220" y="734" width="67" height="22" fill="#fff"/>
 <rect x="220" y="731" width="67" height="3" fill="#40865c"/>
 <path d="M1133 743.5 H1143" stroke="#333" stroke-width="1.1"/>
 <path d="M1239 744.5 H1251 M1245 738.5 V750.5" stroke="#333" stroke-width="1.1"/>
</svg>
<div class="st" style="left:167px">Данные</div>
<div class="st" style="left:230px;color:#111;font-weight:bold">Графики</div>
<div class="st" style="left:302px">Мощности по годам</div>
<div class="st" style="left:431px">Прирост по годам</div>
<div class="st" style="left:552px">Доли по технологиям в год</div>
<div class="st" style="left:1151px;color:#333;font-weight:bold;letter-spacing:-0.2px">Масштаб 100%</div>
</body></html>
